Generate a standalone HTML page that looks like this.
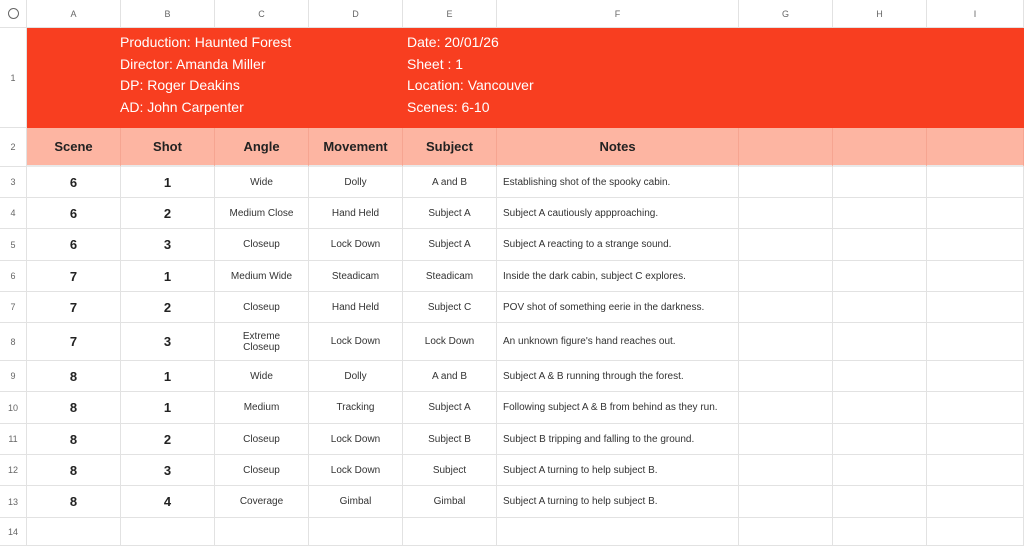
<!DOCTYPE html>
<html><head><meta charset="utf-8"><style>
*{margin:0;padding:0;box-sizing:border-box}
body{width:1024px;height:546px;overflow:hidden;background:#fff;font-family:"Liberation Sans",sans-serif;position:relative}
.c{position:absolute;display:flex;align-items:center;justify-content:center;text-align:center;border-right:1px solid #e2e2e2;border-bottom:1px solid #e2e2e2;font-size:10px;color:#333}
.h{color:#666;font-size:9px;background:#fff}
.b{font-weight:bold;font-size:13px;color:#222}
.n{justify-content:flex-start;padding-left:6px}
.t{position:absolute;color:#fff;font-size:14px;line-height:21.5px}
</style></head><body>
<div style="position:absolute;left:27px;top:28px;width:997px;height:100px;background:#f83e20"></div>
<div style="position:absolute;left:27px;top:128px;width:997px;height:39px;background:#fdb5a2"></div>
<div id="g"></div>
<div class="t" style="left:120px;top:32px">Production: Haunted Forest<br>Director: Amanda Miller<br>DP: Roger Deakins<br>AD: John Carpenter</div>
<div class="t" style="left:407px;top:32px">Date: 20/01/26<br>Sheet : 1<br>Location: Vancouver<br>Scenes: 6-10</div>
<script>
var X=[0,27,121,215,309,403,497,739,833,927,1024];
var Y=[0,28,128,167,198,229,261,292,323,361,392,424,455,486,518,546];
var L=["","A","B","C","D","E","F","G","H","I"];
var H=["Scene","Shot","Angle","Movement","Subject","Notes"];
var D=[["6","1","Wide","Dolly","A and B","Establishing shot of the spooky cabin."],
["6","2","Medium Close","Hand Held","Subject A","Subject A cautiously appproaching."],
["6","3","Closeup","Lock Down","Subject A","Subject A reacting to a strange sound."],
["7","1","Medium Wide","Steadicam","Steadicam","Inside the dark cabin, subject C explores."],
["7","2","Closeup","Hand Held","Subject C","POV shot of something eerie in the darkness."],
["7","3","Extreme<br>Closeup","Lock Down","Lock Down","An unknown figure's hand reaches out."],
["8","1","Wide","Dolly","A and B","Subject A &amp; B running through the forest."],
["8","1","Medium","Tracking","Subject A","Following subject A &amp; B from behind as they run."],
["8","2","Closeup","Lock Down","Subject B","Subject B tripping and falling to the ground."],
["8","3","Closeup","Lock Down","Subject","Subject A turning to help subject B."],
["8","4","Coverage","Gimbal","Gimbal","Subject A turning to help subject B."]];
var s="";
function cell(x0,y0,x1,y1,cls,txt,st){s+='<div class="c '+cls+'" style="left:'+x0+'px;top:'+y0+'px;width:'+(x1-x0)+'px;height:'+(y1-y0)+'px;'+(st||'')+'">'+txt+'</div>';}
for(var i=1;i<10;i++)cell(X[i],0,X[i+1],28,"h",L[i]);
cell(0,0,27,28,"h",'<span style="width:11px;height:11px;border:1.5px solid #666;border-radius:50%;display:inline-block"></span>');
for(var r=1;r<15;r++)cell(0,Y[r],27,Y[r+1],"h",r);
for(var j=0;j<6;j++)cell(X[j+1],128,X[j+2],167,"b",H[j],"border-color:#f6a591;border-bottom:2px solid #e9e9e9");
for(var j=6;j<9;j++)cell(X[j+1],128,X[j+2],167,"","","border-color:#f6a591;border-bottom:2px solid #e9e9e9");
for(var r=0;r<11;r++){for(var j=0;j<9;j++){var t=j<6?D[r][j]:"";var cls=j<2?"b":(j==5?"n":"");cell(X[j+1],Y[r+3],X[j+2],Y[r+4],cls,t);}}
for(var j=0;j<9;j++)cell(X[j+1],518,X[j+2],546,"","");
document.getElementById("g").innerHTML=s;
</script>
</body></html>
